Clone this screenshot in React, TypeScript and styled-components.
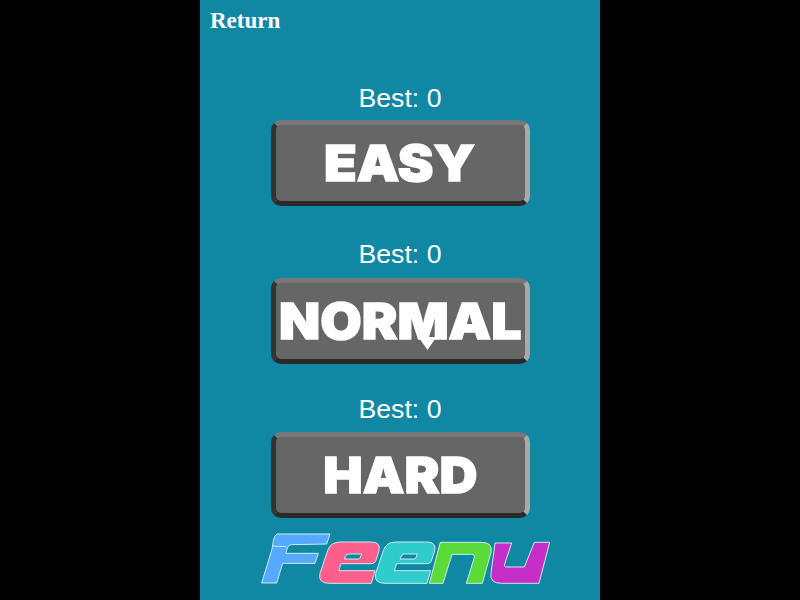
import React from "react";
import styled, { createGlobalStyle } from "styled-components";

const Global = createGlobalStyle`
  html, body { margin: 0; padding: 0; background: #000; height: 100%; overflow: hidden; }
`;

const Screen = styled.main`
  width: 400px;
  height: 600px;
  margin: 0 auto;
  background: #1188a3;
  display: flex;
  flex-direction: column;
  align-items: center;
`;

const ReturnLink = styled.a`
  align-self: flex-start;
  height: 40px;
  padding: 8px 0 0 10px;
  box-sizing: border-box;
  font: bold 23px/26px "Liberation Serif", "Times New Roman", serif;
  color: #fff;
  cursor: pointer;
`;

const Level = styled.section<{ $top: number; $gap: number }>`
  margin-top: ${(p) => p.$top}px;
  display: flex;
  flex-direction: column;
  align-items: center;
  gap: ${(p) => p.$gap}px;
`;

const Best = styled.div`
  height: 32px;
  font: 26.67px/32px "Liberation Sans", Arial, sans-serif;
  color: #fff;
`;

const LevelButton = styled.button`
  position: relative;
  width: 259px;
  height: 86px;
  box-sizing: border-box;
  padding: 0;
  background: #666;
  border-style: solid;
  border-width: 5px;
  border-color: #777 #a9a9a9 #2a2a2a #333;
  border-radius: 10px;
  cursor: pointer;
`;

const Label = styled.span<{ $stretch: number }>`
  display: inline-block;
  color: #fff;
  font: 900 50px/76px Inter, "Liberation Sans", sans-serif;
  -webkit-text-stroke: 1.4px #fff;
  transform: scaleX(${(p) => p.$stretch});
`;

const Spike = styled.span`
  position: absolute;
  left: 143px;
  top: 54px;
  width: 18px;
  height: 13px;
  background: #fff;
  clip-path: polygon(0 0, 100% 0, 50% 100%);
`;

const Logo = styled.svg`
  width: 300px;
  height: 70px;
  margin-top: 6px;
  margin-left: 21px;
  display: block;
`;

const letterStroke = { stroke: "#cfeaf0", strokeWidth: 3, strokeLinejoin: "round" as const };

export default function App() {
  return (
    <Screen>
      <Global />
      <ReturnLink>Return</ReturnLink>
      <Level $top={42} $gap={6}>
        <Best>Best: 0</Best>
        <LevelButton>
          <Label $stretch={1.07}>EASY</Label>
        </LevelButton>
      </Level>
      <Level $top={32} $gap={8}>
        <Best>Best: 0</Best>
        <LevelButton>
          <Label $stretch={1.07}>NORMAL</Label>
          <Spike />
        </LevelButton>
      </Level>
      <Level $top={29} $gap={7}>
        <Best>Best: 0</Best>
        <LevelButton>
          <Label $stretch={1.05}>HARD</Label>
        </LevelButton>
      </Level>
      <Logo viewBox="0 0 900 210" role="img" aria-label="Feenu">
        <path
          {...letterStroke}
          fill="#55aaff"
          d="M48 30 L207 30 L197 60 L92 62 Q82 62 79 72 L75 88 L172 88 L162 118 L65 118 L47 177 L2 177 L33 75 L37 50 Q40 34 48 30 Z"
        />
        <path {...letterStroke} fill="none" d="M35 66 L76 68" />
        <path
          {...letterStroke}
          fill="#ff5f8d"
          fillRule="evenodd"
          d="M238 54 L330 54 Q360 54 354 80 L344 112 Q341 119 330 119 L240 119 L233 140 L342 140 L331 178 L205 178 Q170 178 177 148 L200 80 Q208 54 238 54 Z M262 90 Q255 90 250 105 L292 105 Q299 105 302 90 Z"
        />
        <path
          {...letterStroke}
          fill="#2ecccc"
          fillRule="evenodd"
          d="M405 54 L497 54 Q527 54 521 80 L511 112 Q508 119 497 119 L407 119 L400 140 L509 140 L498 178 L372 178 Q337 178 344 148 L367 80 Q375 54 405 54 Z M429 90 Q422 90 417 105 L459 105 Q466 105 469 90 Z"
        />
        <path
          {...letterStroke}
          fill="#5bdb38"
          d="M538 55 L660 55 Q697 55 690 85 L664 178 L616 178 L640 100 Q642 91 632 91 L573 91 L546 178 L505 178 Z"
        />
        <path
          {...letterStroke}
          fill="#c72ec7"
          d="M702 57 L752 57 L731 120 Q728 129 738 129 L790 129 L820 55 L866 55 L834 178 L722 178 Q685 178 690 148 Z"
        />
      </Logo>
    </Screen>
  );
}
